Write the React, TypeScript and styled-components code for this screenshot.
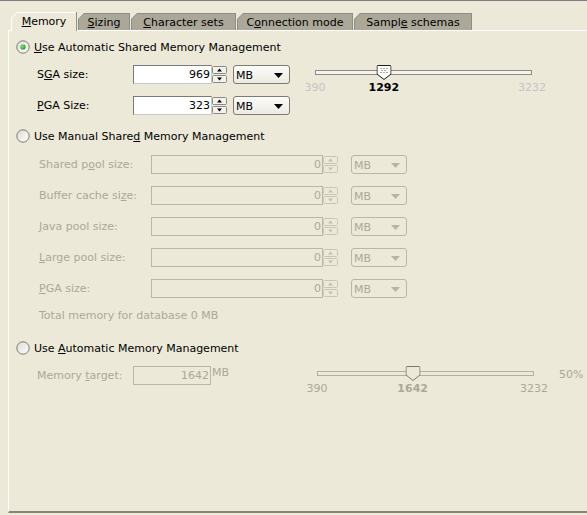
import React from "react";
import styled, { createGlobalStyle } from "styled-components";

const GlobalStyle = createGlobalStyle`
    html, body {
        margin: 0;
        padding: 0;
        background: #ece9d8;
    }
    body {
        font-family: "DejaVu Sans", Tahoma, sans-serif;
        font-size: 11px;
        color: #000;
    }
`

const DISABLED = "#aca899";

const Window = styled.div`
    width: 587px;
    height: 515px;
    box-sizing: border-box;
    border-top: 1px solid #7d7d7d;
    background: #ece9d8;
    display: flex;
    flex-direction: column;
    overflow: hidden;
`

const TabStrip = styled.div`
    display: flex;
    align-items: flex-end;
    gap: 1px;
    height: 18px;
    margin-top: 11px;
    padding-left: 11px;
    position: relative;
    z-index: 1;
`

const TabFrame = styled.div<{ $w: number; $active?: boolean }>`
    width: ${p => p.$w}px;
    height: ${p => p.$active ? 19 : 17}px;
    margin-bottom: ${p => p.$active ? -1 : 0}px;
    box-sizing: border-box;
    padding: 1px 1px 0 1px;
    background: ${p => p.$active
        ? "linear-gradient(to right, #ffffff calc(100% - 1px), #8d8d8d 0)"
        : "#8e8e86"};
    clip-path: polygon(6px 0, 100% 0, 100% 100%, 0 100%, 0 6px);
`

const TabFace = styled.div<{ $active?: boolean }>`
    height: 100%;
    display: flex;
    align-items: center;
    justify-content: center;
    background: ${p => p.$active ? "#ece9d8" : "#aca899"};
    clip-path: polygon(5px 0, 100% 0, 100% 100%, 0 100%, 0 5px);
    color: #000;
    white-space: nowrap;
    padding-bottom: ${p => p.$active ? 1 : 0}px;
    box-sizing: border-box;
`

const Panel = styled.div`
    flex: 1;
    margin-left: 8px;
    margin-bottom: 2px;
    border-left: 1px solid #ffffff;
    border-top: 1px solid #ffffff;
    border-bottom: 2px solid #858580;
    padding: 8px 0 0 7px;
    display: flex;
    flex-direction: column;
`

const RadioRow = styled.div<{ $mt?: number }>`
    display: flex;
    align-items: center;
    gap: 4px;
    height: 16px;
    margin-top: ${p => p.$mt || 0}px;
    white-space: nowrap;
`

const SectionBody = styled.div<{ $mt: number }>`
    display: flex;
    align-items: flex-start;
    margin-top: ${p => p.$mt}px;
`

const FieldColumn = styled.div<{ $indent: number }>`
    display: flex;
    flex-direction: column;
    gap: 12px;
    padding-left: ${p => p.$indent}px;
`

const FieldRow = styled.div`
    display: flex;
    align-items: center;
    height: 19px;
`

const Label = styled.span<{ $w: number; $disabled?: boolean }>`
    width: ${p => p.$w}px;
    color: ${p => p.$disabled ? DISABLED : "#000"};
    white-space: nowrap;
`

const NumberBox = styled.div<{ $w: number; $disabled?: boolean }>`
    width: ${p => p.$w}px;
    height: 19px;
    box-sizing: border-box;
    border: 1px solid ${p => p.$disabled ? "#bab7a6" : "#7a7a7a"};
    border-right-color: ${p => p.$disabled ? "#bab7a6" : "#c8c8c8"};
    border-bottom-color: ${p => p.$disabled ? "#bab7a6" : "#c8c8c8"};
    background: ${p => p.$disabled ? "#ece9d8" : "#ffffff"};
    color: ${p => p.$disabled ? DISABLED : "#000"};
    display: flex;
    align-items: center;
    justify-content: flex-end;
    padding-right: 1px;
`

const Spinner = styled.div`
    width: 16px;
    height: 19px;
    display: flex;
    flex-direction: column;
    box-sizing: border-box;
    padding: 1px 1px 1px 0;
    gap: 1px;
    svg {
        flex: 1;
        width: 15px;
    }
`

const Combo = styled.div<{ $w: number; $ml: number; $disabled?: boolean }>`
    width: ${p => p.$w}px;
    height: 19px;
    margin-left: ${p => p.$ml}px;
    box-sizing: border-box;
    border: 1px solid ${p => p.$disabled ? "#bab7a6" : "#7b7b72"};
    border-radius: 3px;
    background: ${p => p.$disabled ? "#ece9d8" : "linear-gradient(#fbfbf8, #ecebe2)"};
    color: ${p => p.$disabled ? DISABLED : "#000"};
    display: flex;
    align-items: center;
    justify-content: space-between;
    padding: 1px 6px 0 2px;
`

const Unit = styled.span`
    color: ${DISABLED};
    margin-left: 1px;
    align-self: flex-start;
`

const Note = styled.div<{ $mt: number }>`
    margin-top: ${p => p.$mt}px;
    padding-left: 23px;
    height: 14px;
    line-height: 14px;
    color: ${DISABLED};
`

const SliderWrap = styled.div<{ $ml: number }>`
    display: flex;
    align-items: flex-start;
    margin-left: ${p => p.$ml}px;
`

const SliderArea = styled.div`
    position: relative;
    width: 217px;
    height: 32px;
    margin-left: 10px;
`

const Track = styled.div<{ $disabled?: boolean }>`
    position: absolute;
    left: 0;
    right: 0;
    top: 5px;
    height: 5px;
    box-sizing: border-box;
    border: 1px solid ${p => p.$disabled ? "#b3b09e" : "#8d8c84"};
    background: ${p => p.$disabled ? "#ece9d8" : "#f4f3ee"};
`

const Thumb = styled.svg`
    position: absolute;
    top: 0;
    width: 15px;
    height: 15px;
    transform: translateX(-50%);
`

const TickLabel = styled.span<{ $bold?: boolean; $color: string }>`
    position: absolute;
    top: 17px;
    transform: translateX(-50%);
    font-size: 11px;
    line-height: 12px;
    font-weight: ${p => p.$bold ? 700 : 400};
    color: ${p => p.$color};
    white-space: nowrap;
`

const Percent = styled.span`
    margin-left: 25px;
    margin-top: 2px;
    color: ${DISABLED};
`

function Key({ text, at }: { text: string; at: number }) {
    return (
        <span>{text.slice(0, at)}<u>{text[at]}</u>{text.slice(at + 1)}</span>
    )
}

function Radio({ checked }: { checked?: boolean }) {
    return (
        <svg width="14" height="14" viewBox="0 0 14 14">
            <defs>
                <linearGradient id={checked ? "rg1" : "rg0"} x1="0" y1="0" x2="1" y2="1">
                    <stop offset="0" stopColor="#dcdbd3" />
                    <stop offset="1" stopColor="#ffffff" />
                </linearGradient>
                <radialGradient id="dot" cx="0.4" cy="0.4" r="0.6">
                    <stop offset="0" stopColor="#7fe07f" />
                    <stop offset="1" stopColor="#1f9b1f" />
                </radialGradient>
            </defs>
            <circle cx="7" cy="7" r="6.2" fill={`url(#${checked ? "rg1" : "rg0"})`} stroke="#7a7a72" strokeWidth="1" />
            {checked ? <circle cx="7" cy="7" r="2.6" fill="url(#dot)" /> : null}
        </svg>
    )
}

function SpinArrows({ disabled }: { disabled?: boolean }) {
    const c = disabled ? "#c3c0b0" : "#000";
    const edge = disabled ? "#c9c6b6" : "#8a8a84";
    return (
        <Spinner>
            <svg viewBox="0 0 15 8" preserveAspectRatio="none">
                <rect x="0.5" y="0.5" width="14" height="7" rx="1" fill={disabled ? "#ece9d8" : "#f3f2ec"} stroke={edge} />
                <path d="M5 5.5 L10 5.5 L7.5 2.5 Z" fill={c} />
            </svg>
            <svg viewBox="0 0 15 8" preserveAspectRatio="none">
                <rect x="0.5" y="0.5" width="14" height="7" rx="1" fill={disabled ? "#ece9d8" : "#f3f2ec"} stroke={edge} />
                <path d="M5 2.5 L10 2.5 L7.5 5.5 Z" fill={c} />
            </svg>
        </Spinner>
    )
}

function ComboArrow({ disabled }: { disabled?: boolean }) {
    return (
        <svg width="9" height="5" viewBox="0 0 9 5">
            <path d="M0 0 L9 0 L4.5 5 Z" fill={disabled ? "#b7b4a3" : "#000"} />
        </svg>
    )
}

interface SliderProps {
    value: number;
    min: number;
    max: number;
    disabled?: boolean;
}

function Slider({ value, min, max, disabled }: SliderProps) {
    const pos = ((value - min) / (max - min)) * 217;
    const edgeColor = disabled ? DISABLED : "#c4c4c4";
    return (
        <SliderArea>
            <Track $disabled={disabled} />
            <Thumb viewBox="0 0 15 15" style={{ left: pos }}>
                <path d="M1.5 0.5 L13.5 0.5 Q14.5 0.5 14.5 1.5 L14.5 9 L7.5 14.5 L0.5 9 L0.5 1.5 Q0.5 0.5 1.5 0.5 Z"
                    fill={disabled ? "#ece9d8" : "#ffffff"} stroke={disabled ? "#7d7b70" : "#1c1c1c"} />
                {!disabled ? (
                    <g fill="#555">
                        <rect x="4" y="3" width="1" height="1" /><rect x="7" y="3" width="1" height="1" /><rect x="10" y="3" width="1" height="1" />
                        <rect x="5" y="5" width="1" height="1" /><rect x="8" y="5" width="1" height="1" />
                        <rect x="4" y="7" width="1" height="1" /><rect x="7" y="7" width="1" height="1" /><rect x="10" y="7" width="1" height="1" />
                    </g>
                ) : null}
            </Thumb>
            <TickLabel $color={edgeColor} style={{ left: 0 }}>{min}</TickLabel>
            <TickLabel $bold $color={disabled ? DISABLED : "#000"} style={{ left: pos }}>{value}</TickLabel>
            <TickLabel $color={edgeColor} style={{ left: 217 }}>{max}</TickLabel>
        </SliderArea>
    )
}

const manualRows = [
    { text: "Shared pool size:", at: 8 },
    { text: "Buffer cache size:", at: 15 },
    { text: "Java pool size:", at: 0 },
    { text: "Large pool size:", at: 0 },
    { text: "PGA size:", at: 0 },
];

const tabs = [
    { text: "Memory", at: 0, w: 66 },
    { text: "Sizing", at: 0, w: 52 },
    { text: "Character sets", at: 0, w: 105 },
    { text: "Connection mode", at: 1, w: 116 },
    { text: "Sample schemas", at: 5, w: 118 },
];

export default function App() {
    return (<>
        <GlobalStyle />
        <Window>
            <TabStrip>
                {tabs.map((t, i) => (
                    <TabFrame key={t.text} $w={t.w} $active={i === 0}>
                        <TabFace $active={i === 0}><Key text={t.text} at={t.at} /></TabFace>
                    </TabFrame>
                ))}
            </TabStrip>
            <Panel>
                <RadioRow>
                    <Radio checked />
                    <Key text="Use Automatic Shared Memory Management" at={0} />
                </RadioRow>
                <SectionBody $mt={10}>
                    <FieldColumn $indent={21}>
                        <FieldRow>
                            <Label $w={96}><Key text="SGA size:" at={1} /></Label>
                            <NumberBox $w={79}>969</NumberBox>
                            <SpinArrows />
                            <Combo $w={57} $ml={5}>MB<ComboArrow /></Combo>
                        </FieldRow>
                        <FieldRow>
                            <Label $w={96}><Key text="PGA Size:" at={0} /></Label>
                            <NumberBox $w={79}>323</NumberBox>
                            <SpinArrows />
                            <Combo $w={57} $ml={5}>MB<ComboArrow /></Combo>
                        </FieldRow>
                    </FieldColumn>
                    <SliderWrap $ml={15}>
                        <Slider value={1292} min={390} max={3232} />
                    </SliderWrap>
                </SectionBody>

                <RadioRow $mt={13}>
                    <Radio />
                    <Key text="Use Manual Shared Memory Management" at={16} />
                </RadioRow>
                <SectionBody $mt={11}>
                    <FieldColumn $indent={23}>
                        {manualRows.map(r => (
                            <FieldRow key={r.text}>
                                <Label $w={112} $disabled><Key text={r.text} at={r.at} /></Label>
                                <NumberBox $w={172} $disabled>0</NumberBox>
                                <SpinArrows disabled />
                                <Combo $w={56} $ml={12} $disabled>MB<ComboArrow disabled /></Combo>
                            </FieldRow>
                        ))}
                    </FieldColumn>
                </SectionBody>
                <Note $mt={11}>Total memory for database 0 MB</Note>

                <RadioRow $mt={17}>
                    <Radio />
                    <Key text="Use Automatic Memory Management" at={4} />
                </RadioRow>
                <SectionBody $mt={10}>
                    <FieldColumn $indent={21}>
                        <FieldRow>
                            <Label $w={96} $disabled><Key text="Memory target:" at={7} /></Label>
                            <NumberBox $w={78} $disabled>1642</NumberBox>
                            <Unit>MB</Unit>
                        </FieldRow>
                    </FieldColumn>
                    <SliderWrap $ml={78}>
                        <Slider value={1642} min={390} max={3232} disabled />
                        <Percent>50%</Percent>
                    </SliderWrap>
                </SectionBody>
            </Panel>
        </Window>
    </>)
}
